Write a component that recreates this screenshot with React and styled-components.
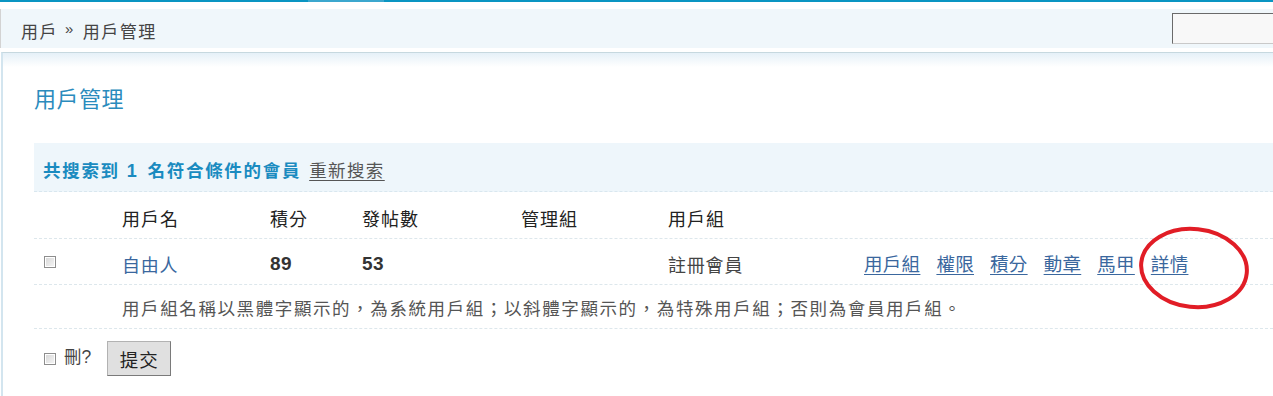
import React from 'react';
import styled, { createGlobalStyle } from 'styled-components';

const GlobalStyle = createGlobalStyle`
  html, body {
    margin: 0;
    padding: 0;
    background: #fff;
    overflow: hidden;
  }
  body {
    font-family: "Liberation Sans", "Noto Sans CJK TC", sans-serif;
    color: #333;
  }
`;

const Page = styled.div`
  position: relative;
  width: 1273px;
  height: 396px;
  overflow: hidden;
`;

const TopLine = styled.div`
  height: 2px;
  margin-bottom: 7px;
  background: linear-gradient(
    to right,
    #0a95c2 0,
    #0a95c2 308px,
    #3ca7ce 308px,
    #3ca7ce 384px,
    #0a95c2 384px
  );
`;

const NavBar = styled.div`
  display: flex;
  align-items: center;
  height: 39px;
  padding-left: 20px;
  background: #f0f7fb;
  border-left: 1px solid #d3d3d3;
  font-size: 17px;
  letter-spacing: 1.5px;
  color: #444;
`;

const Crumb = styled.span`
  padding-top: 4px;
`;

const Sep = styled.span`
  margin: 0 8px 0 7px;
  font-size: 15px;
`;

const SearchBox = styled.input`
  margin-left: auto;
  width: 101px;
  height: 31px;
  box-sizing: border-box;
  border: 1px solid #6a6a6a;
  border-right: none;
  border-bottom-color: #c9c9c9;
  background: #f8f8f8;
  outline: none;
  padding: 0;
`;

const Content = styled.div`
  margin-top: 4px;
  margin-left: 1px;
  border-top: 1px solid #c6d8df;
  border-left: 2px solid #d3e5ef;
  padding: 32px 0 20px 31px;
  background: linear-gradient(to bottom, #e5f0f8 0, #ffffff 14px);
`;

const Title = styled.h2`
  margin: 0 0 28px;
  height: 30px;
  line-height: 30px;
  font-size: 22px;
  font-weight: normal;
  letter-spacing: 0.5px;
  color: #2a8bbd;
`;

const ResultBar = styled.div`
  display: flex;
  align-items: center;
  height: 49px;
  padding: 4px 0 0 9px;
  box-sizing: border-box;
  background: #eef6fb;
  border-bottom: 1px dashed #d9e7ef;
  font-size: 17.5px;
  letter-spacing: 1.7px;
`;

const ResultText = styled.strong`
  color: #1a8bc0;
  font-weight: bold;
  margin-right: 8px;
`;

const Count = styled.span`
  font-size: 18px;
  margin: 0 9px 0 7px;
`;

const PlainLink = styled.a`
  color: #555;
  text-decoration: underline;
  text-underline-offset: 3px;
  cursor: pointer;
  letter-spacing: 1.4px;
`;

const Row = styled.div`
  display: grid;
  grid-template-columns: 88px 148px 92px 159px 147px 196px 1fr;
  align-items: center;
  height: ${p => p.$h}px;
  box-sizing: border-box;
  border-bottom: 1px dashed #dde7ec;
  font-size: 18px;
  letter-spacing: 0.8px;
`;

const HeadCell = styled.div`
  color: #222;
  font-size: 18px;
  letter-spacing: 1px;
  padding-top: 6px;
`;

const Cell = styled.div`
  padding-top: ${p => p.$pt || 0}px;
  padding-left: ${p => p.$pl || 0}px;
  color: #444;
`;

const Num = styled.span`
  font-size: 19px;
  font-weight: bold;
  letter-spacing: 0.5px;
  color: #333;
`;

const UserLink = styled.a`
  color: #3a679e;
  text-decoration: none;
  cursor: pointer;
`;

const Actions = styled.div`
  display: flex;
  gap: 16px;
  padding-top: 3px;
`;

const ActionLink = styled.a`
  color: #3a679e;
  font-size: 18.5px;
  letter-spacing: 0.3px;
  text-decoration: underline;
  text-underline-offset: 3px;
  cursor: pointer;
`;

const Check = styled.input.attrs({ type: 'checkbox' })`
  appearance: none;
  margin: 0;
  width: 12px;
  height: 12px;
  box-sizing: border-box;
  border: 1px solid #8e8e8e;
  background: linear-gradient(135deg, #d6d6d6 0, #f6f6f6 100%);
  box-shadow: inset 0 0 0 1px #fff;
`;

const Note = styled.div`
  grid-column: 2 / -1;
  font-size: 17.5px;
  letter-spacing: 1.6px;
  color: #555;
  padding-top: 2px;
`;

const Footer = styled.div`
  display: flex;
  align-items: center;
  margin-top: 12px;
  padding-left: 10px;
`;

const DelLabel = styled.span`
  margin: 0 16px 0 8px;
  font-size: 17.5px;
  color: #444;
  padding-bottom: 6px;
`;

const SubmitButton = styled.button`
  width: 64px;
  height: 35px;
  padding: 0;
  background: #e0e0e0;
  border: 1px solid #b2b2b2;
  border-right-color: #7a7a7a;
  border-bottom-color: #7a7a7a;
  font-family: "Liberation Sans", "Noto Sans CJK TC", sans-serif;
  font-size: 18.5px;
  letter-spacing: 1px;
  color: #222;
`;

const Annotation = styled.svg`
  position: absolute;
  left: 1136px;
  top: 224px;
  pointer-events: none;
`;

const actions = ['用戶組', '權限', '積分', '動章', '馬甲', '詳情'];

export default function App() {
  return (
    <Page>
      <GlobalStyle />
      <TopLine />
      <NavBar>
        <Crumb>用戶</Crumb>
        <Sep>»</Sep>
        <Crumb>用戶管理</Crumb>
        <SearchBox />
      </NavBar>
      <Content>
        <Title>用戶管理</Title>
        <ResultBar>
          <ResultText>
            共搜索到<Count>1</Count>名符合條件的會員
          </ResultText>
          <PlainLink>重新搜索</PlainLink>
        </ResultBar>
        <Row $h={47}>
          <HeadCell />
          <HeadCell>用戶名</HeadCell>
          <HeadCell>積分</HeadCell>
          <HeadCell>發帖數</HeadCell>
          <HeadCell>管理組</HeadCell>
          <HeadCell>用戶組</HeadCell>
          <HeadCell />
        </Row>
        <Row $h={46}>
          <Cell $pl={10} $pt={2}>
            <Check />
          </Cell>
          <Cell $pt={4}>
            <UserLink>自由人</UserLink>
          </Cell>
          <Cell $pt={4}>
            <Num>89</Num>
          </Cell>
          <Cell $pt={4}>
            <Num>53</Num>
          </Cell>
          <Cell />
          <Cell $pt={4}>註冊會員</Cell>
          <Actions>
            {actions.map(a => (
              <ActionLink key={a}>{a}</ActionLink>
            ))}
          </Actions>
        </Row>
        <Row $h={44}>
          <Note>
            用戶組名稱以黑體字顯示的，為系統用戶組；以斜體字顯示的，為特殊用戶組；否則為會員用戶組。
          </Note>
        </Row>
        <Footer>
          <Check />
          <DelLabel>刪?</DelLabel>
          <SubmitButton>提交</SubmitButton>
        </Footer>
      </Content>
      <Annotation width="116" height="90" viewBox="0 0 116 90">
        <ellipse
          cx="58"
          cy="44"
          rx="53"
          ry="39"
          fill="none"
          stroke="#e11d26"
          strokeWidth="4"
          transform="rotate(6 58 44)"
        />
      </Annotation>
    </Page>
  );
}
